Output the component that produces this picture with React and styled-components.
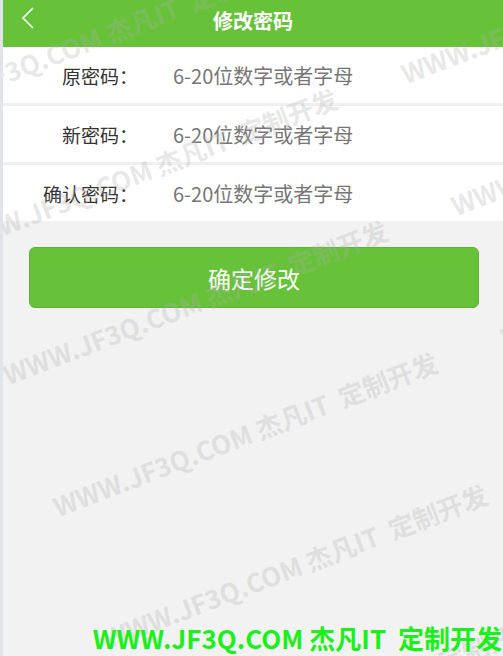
import React from 'react';
import styled, { createGlobalStyle } from 'styled-components';

const GlobalStyle = createGlobalStyle`
  html, body {
    margin: 0;
    padding: 0;
    background: #f2f2f2;
  }
  * {
    box-sizing: border-box;
  }
`;

const Page = styled.div`
  position: relative;
  min-height: 100vh;
  overflow: hidden;
  background: #f2f2f2;
  border-left: 3px solid #e1e4ec;
  font-family: "Noto Sans CJK SC", "Liberation Sans", sans-serif;
`;

const Header = styled.header`
  display: grid;
  grid-template-columns: 60px 1fr 60px;
  height: 47px;
  background: #67c23a;
`;

const BackButton = styled.button`
  align-self: start;
  justify-self: start;
  margin: 7px 0 0 18px;
  padding: 0;
  border: none;
  background: none;
  display: flex;
  cursor: pointer;
`;

const Title = styled.h1`
  margin: 0;
  align-self: center;
  text-align: center;
  color: #fff;
  font-size: 20px;
  font-weight: 700;
  line-height: 1;
  padding-bottom: 5px;
`;

const Form = styled.form`
  display: flex;
  flex-direction: column;
  gap: 3px;
  background: #efefef;
`;

const Row = styled.label`
  display: flex;
  align-items: center;
  height: 56px;
  background: #fff;
`;

const Label = styled.span`
  width: 135px;
  text-align: right;
  font-size: 19px;
  line-height: 1;
  color: #333;
  flex: none;
`;

const Input = styled.input`
  flex: 1;
  margin-left: 35px;
  border: none;
  outline: none;
  background: transparent;
  font-family: inherit;
  font-size: 20px;
  color: #333;
  padding: 0;
  &::placeholder {
    color: #767676;
  }
`;

const SubmitButton = styled.button`
  display: block;
  width: calc(100% - 50px);
  height: 61px;
  margin: 26px 24px 0 26px;
  border: 1px solid #5eb334;
  border-radius: 6px;
  background: #67c23a;
  color: #fff;
  font-family: inherit;
  font-size: 23px;
  cursor: pointer;
`;

const MarkLayer = styled.div`
  position: absolute;
  inset: 0;
  pointer-events: none;
  overflow: hidden;
`;

const Mark = styled.span`
  position: absolute;
  transform: translate(-50%, -50%) rotate(-21deg);
  white-space: pre;
  font-size: 26px;
  font-weight: 700;
  line-height: 1;
  color: rgba(175, 175, 175, 0.3);
`;

const Stamp = styled.div`
  position: absolute;
  right: 1px;
  bottom: 5px;
  white-space: pre;
  font-size: 26px;
  font-weight: 700;
  line-height: 1;
  color: #1cf01c;
`;

const MARK_TEXT = 'WWW.JF3Q.COM 杰凡IT  定制开发';

const marks = [
  [92, 38], [142, 170], [192, 302], [242, 434], [292, 566], [342, 698],
  [590, 1], [640, 133], [690, 265],
];

const fields = [
  { name: 'oldPwd', label: '原密码：' },
  { name: 'newPwd', label: '新密码：' },
  { name: 'confirmPwd', label: '确认密码：' },
];

export default function App() {
  return (
    <Page>
      <GlobalStyle />
      <Header>
        <BackButton type="button" aria-label="返回">
          <svg width="14" height="22" viewBox="0 0 14 22" fill="none">
            <path d="M12 1 L2 11 L12 21" stroke="#fff" strokeWidth="1.7" />
          </svg>
        </BackButton>
        <Title>修改密码</Title>
        <span />
      </Header>

      <Form onSubmit={e => e.preventDefault()}>
        {fields.map(f => (
          <Row key={f.name}>
            <Label>{f.label}</Label>
            <Input type="password" name={f.name} placeholder="6-20位数字或者字母" />
          </Row>
        ))}
      </Form>

      <SubmitButton type="button">确定修改</SubmitButton>

      <MarkLayer>
        {marks.map(([x, y], i) => (
          <Mark key={i} style={{ left: x, top: y }}>{MARK_TEXT}</Mark>
        ))}
        <Stamp>{MARK_TEXT}</Stamp>
      </MarkLayer>
    </Page>
  );
}
